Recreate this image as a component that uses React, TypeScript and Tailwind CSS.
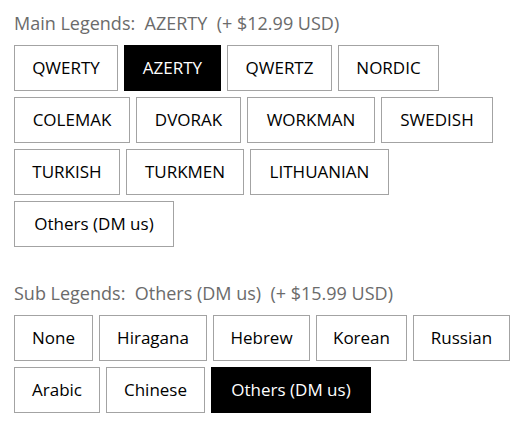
const mainLegends = [
  { label: "QWERTY", w: "w-[104px]" },
  { label: "AZERTY", w: "w-[97px]" },
  { label: "QWERTZ", w: "w-[105px]" },
  { label: "NORDIC", w: "w-[101px]" },
  { label: "COLEMAK", w: "w-[116px]" },
  { label: "DVORAK", w: "w-[105px]" },
  { label: "WORKMAN", w: "w-[128px]" },
  { label: "SWEDISH", w: "w-[112px]" },
  { label: "TURKISH", w: "w-[106px]" },
  { label: "TURKMEN", w: "w-[118px]" },
  { label: "LITHUANIAN", w: "w-[139px]" },
  { label: "Others (DM us)", w: "w-[160px]" },
];

const subLegends = [
  { label: "None", w: "w-[79px]" },
  { label: "Hiragana", w: "w-[108px]" },
  { label: "Hebrew", w: "w-[97px]" },
  { label: "Korean", w: "w-[91px]" },
  { label: "Russian", w: "w-[97px]" },
  { label: "Arabic", w: "w-[86px]" },
  { label: "Chinese", w: "w-[99px]" },
  { label: "Others (DM us)", w: "w-[160px]" },
];

type Option = { label: string; w: string };

function OptionGroup({
  title,
  selected,
  price,
  options,
}: {
  title: string;
  selected: string;
  price: string;
  options: Option[];
}) {
  return (
    <div>
      <p className="mb-[10px] whitespace-pre text-[18px] leading-[24px] text-[#6b6b6b]">
        {title}:  {selected}  (+ {price} USD)
      </p>
      <div className="flex flex-wrap gap-[6px]">
        {options.map((opt) => {
          const active = opt.label === selected;
          return (
            <button
              key={opt.label}
              className={
                active
                  ? `${opt.w} flex h-[46px] items-center justify-center border border-black bg-black text-[17px] text-white`
                  : `${opt.w} flex h-[46px] items-center justify-center border border-[#a3a3a3] bg-white text-[17px] text-black`
              }
            >
              {opt.label}
            </button>
          );
        })}
      </div>
    </div>
  );
}

export default function App() {
  return (
    <div
      className="min-h-screen bg-white px-[14px] pt-[11px]"
      style={{ fontFamily: '"Open Sans", "Noto Sans", sans-serif' }}
    >
      <OptionGroup
        title="Main Legends"
        selected="AZERTY"
        price="$12.99"
        options={mainLegends}
      />
      <div className="mt-[34px]">
        <OptionGroup
          title="Sub Legends"
          selected="Others (DM us)"
          price="$15.99"
          options={subLegends}
        />
      </div>
    </div>
  );
}
